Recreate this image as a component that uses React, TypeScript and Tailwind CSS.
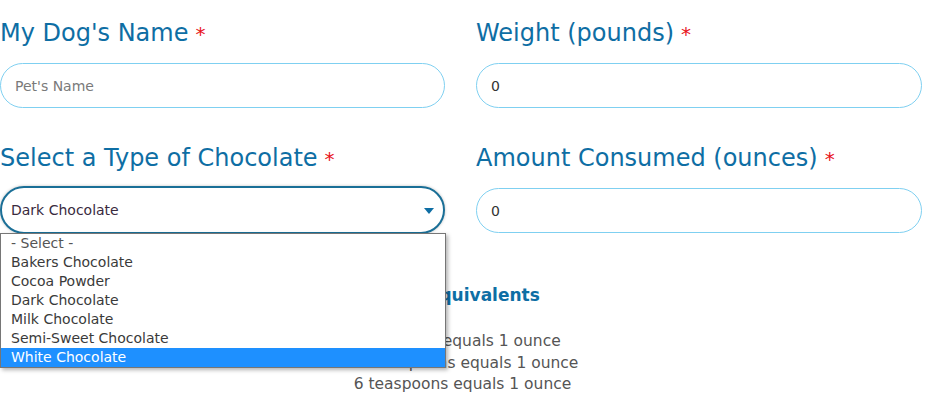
import { ReactNode } from 'react';

const chocolates = [
  'Bakers Chocolate',
  'Cocoa Powder',
  'Dark Chocolate',
  'Milk Chocolate',
  'Semi-Sweet Chocolate',
  'White Chocolate',
];

function FieldLabel({ children }: { children: ReactNode }) {
  return (
    <label className="block text-[24px] leading-[32px] text-[#0e6ea4]">
      {children}
      <span className="ml-[7px] text-[20px] text-[#e8141b]">*</span>
    </label>
  );
}

function TextField({ label, value, placeholder }: { label: string; value?: string; placeholder?: string }) {
  return (
    <div>
      <FieldLabel>{label}</FieldLabel>
      <input
        readOnly
        value={value}
        placeholder={placeholder}
        className="mt-[13px] block h-[45px] w-full rounded-full border border-[#7fd0f1] bg-white px-[14px] text-[14px] text-[#333] placeholder:text-[#7a7a7a] outline-none"
      />
    </div>
  );
}

export default function App() {
  return (
    <div className="relative h-[414px] w-[925px] overflow-hidden bg-white font-['DejaVu_Sans',sans-serif]">
      <div className="grid grid-cols-[445px_446px] gap-x-[31px] gap-y-[34px] pt-[17px]">
        <TextField label="My Dog's Name" placeholder="Pet's Name" />
        <TextField label="Weight (pounds)" value="0" />

        <div>
          <FieldLabel>Select a Type of Chocolate</FieldLabel>
          <div className="mt-[11px] flex h-[48px] items-center justify-between rounded-full border-2 border-[#1a6f97] bg-white pl-[9px] pr-[9px] text-[14px] text-[#3a2a3e] shadow-[0_0_3px_rgba(0,0,0,0.25)]">
            <span>Dark Chocolate</span>
            <svg width="10" height="6" viewBox="0 0 10 6" className="mt-[1px]">
              <path d="M0 0 H10 L5 6 Z" fill="#0e6ea4" />
            </svg>
          </div>
        </div>
        <TextField label="Amount Consumed (ounces)" value="0" />
      </div>

      <div className="mt-[49px] text-center text-[#555]">
        <h3 className="text-[17px] font-bold leading-[24px] text-[#0e6ea4]">Cup Equivalents</h3>
        <div className="mt-[24px] text-[15.5px] leading-[21.5px]">
          <p>28 grams equals 1 ounce</p>
          <p>2 tablespoons equals 1 ounce</p>
          <p>6 teaspoons equals 1 ounce</p>
        </div>
      </div>

      <ul className="absolute left-0 top-[233px] w-[446px] border border-[#767676] bg-white text-[14px] leading-[19px] text-[#3a3a3a] shadow-[2px_2px_4px_rgba(0,0,0,0.3)]">
        <li className="pl-[10px] text-[#555]">- Select -</li>
        {chocolates.map((c) => (
          <li
            key={c}
            className={c === 'White Chocolate' ? 'bg-[#1e90ff] pl-[10px] text-white' : 'pl-[10px]'}
          >
            {c}
          </li>
        ))}
      </ul>
    </div>
  );
}
